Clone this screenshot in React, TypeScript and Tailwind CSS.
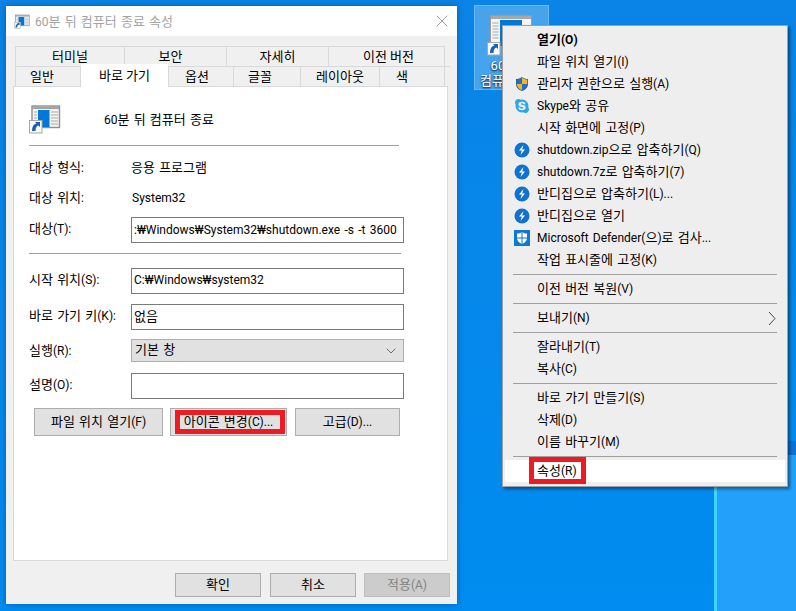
import { ChevronDown, X } from 'lucide-react';
import { FaSkype } from 'react-icons/fa';

// hangul runs sit a size above latin ones, the way Malgun Gothic pairs with Segoe UI
function T({ children }: { children: string }) {
  return (
    <>
      {children.split(/([\uAC00-\uD7A3 ]+)/).map((part, i) =>
        i % 2 === 1 ? (
          <span key={i} className="text-[13px] whitespace-pre [word-spacing:1px]">
            {part}
          </span>
        ) : (
          part
        ),
      )}
    </>
  );
}

function ShortcutIcon({ size }: { size: number }) {
  return (
    <svg width={size} height={size} viewBox="0 0 32 32">
      <rect x="3" y="2" width="27.500" height="21.500" fill="#f4f4f4" stroke="#8f8f8f" strokeWidth="1.400" />
      <rect x="3.500" y="2.500" width="26.500" height="2.500" fill="#a3a3a3" />
      <rect x="9" y="6" width="11.500" height="17" fill="#0078d7" />
      <path d="M22 8h7M22 11h7M22 14h7M22 17h7M22 20h7M5 8h3M5 11h3M5 14h3" stroke="#a8a8a8" strokeWidth="1" />
      <rect x="0.500" y="16.500" width="12.500" height="12.500" fill="#f8f8f8" stroke="#a8a8a8" />
      <path d="M3 27c0-4.500 1.500-7 4.500-7.500L6 18h5v5l-1.500-1.500c-2 .5-3 2-3 5.500z" fill="#1c5fae" />
    </svg>
  );
}

function DesktopShortcut() {
  return (
    <svg width="46" height="41" viewBox="0 0 46 41">
      <rect x="3.500" y="0.500" width="41" height="31" fill="#f4f4f4" stroke="#9a9a9a" />
      <rect x="4" y="1" width="40" height="3" fill="#a8a8a8" />
      <rect x="13" y="5" width="22" height="26" fill="#0078d7" />
      <path d="M5.500 8h6M5.500 11h6M5.500 14h6M5.500 17h6M5.500 20h6M5.500 23h6" stroke="#a8a8a8" strokeWidth="1" />
      <rect x="0.500" y="27.500" width="12.500" height="12.500" fill="#f8f8f8" stroke="#a8a8a8" />
      <path d="M3 38c0-4.500 1.500-7 4.500-7.500L6 29h5v5l-1.500-1.500c-2 .5-3 2-3 5.500z" fill="#1c5fae" />
    </svg>
  );
}

function UacShield() {
  return (
    <svg width="16" height="16" viewBox="0 0 16 16">
      <path d="M8 1c2 1.400 4 2 6 2v5c0 3.500-2.500 5.800-6 7-3.500-1.200-6-3.500-6-7V3c2 0 4-.6 6-2z" fill="#2f5fa8" />
      <path d="M8 1.800V8H2.800V3.700C4.600 3.500 6.400 3 8 1.800z" fill="#1f6fd0" />
      <path d="M8 1.800c1.600 1.200 3.400 1.700 5.200 1.900V8H8z" fill="#f7b61b" />
      <path d="M2.800 8H8v6.200C5 13 2.900 11 2.800 8z" fill="#f7b61b" />
      <path d="M8 8h5.200c-.1 3-2.200 5-5.200 6.200z" fill="#1f6fd0" />
    </svg>
  );
}

function SkypeIcon() {
  return <FaSkype className="text-[16px] text-[#2ba7e8]" />;
}

function BandizipIcon() {
  return (
    <svg width="16" height="16" viewBox="0 0 16 16">
      <circle cx="8" cy="8" r="7.500" fill="#0f72cf" />
      <path d="M9.500 3 5 8.500h2.800L6.500 13 11 7.500H8.200z" fill="#ffffff" />
    </svg>
  );
}

function DefenderIcon() {
  return (
    <svg width="16" height="16" viewBox="0 0 16 16">
      <rect width="16" height="16" fill="#0f78d4" />
      <path d="M8 2c1.600 1 3.400 1.500 5 1.500V8c0 2.800-2 4.800-5 6-3-1.200-5-3.200-5-6V3.500C4.600 3.500 6.400 3 8 2z" fill="#ffffff" />
      <path d="M7.500 2v12.500h1V2zM2.500 7.500v1h11v-1z" fill="#0f78d4" />
    </svg>
  );
}

const topTabs = [
  { label: '터미널', w: 'w-[110px]' },
  { label: '보안', w: 'w-[102px] pr-[10px]' },
  { label: '자세히', w: 'w-[102px]' },
  { label: '이전 버전', w: 'w-[116px] pl-[4px]' },
];

function Field({ label, value, className }: { label: string; value: string; className: string }) {
  return (
    <div className={`flex items-center ${className}`}>
      <span className="w-[102px] pb-0.5">
        <T>{label}</T>
      </span>
      <div className="h-[26px] w-[273px] overflow-hidden border border-[#7a7a7a] bg-white pt-[2px] pl-[2px] whitespace-nowrap">
        <T>{value}</T>
      </div>
    </div>
  );
}

function PushButton({ className, label, children }: { className: string; label: string; children?: React.ReactNode }) {
  return (
    <button className={`flex items-center justify-center border border-[#adadad] bg-[#e1e1e1] ${className}`}>
      <T>{label}</T>
      {children}
    </button>
  );
}

function Dialog() {
  return (
    <div className="absolute top-[6px] left-[6px] flex h-[598px] w-[451px] flex-col bg-[#f0f0f0] text-[12px] text-black shadow-[0_0_6px_rgba(0,40,90,0.45)]">
      <div className="flex h-[30px] shrink-0 items-center justify-between bg-white pr-[5px] pl-[8px] text-[#a3a3a3]">
        <div className="flex items-center gap-[5px] pt-[2px]">
          <ShortcutIcon size={16} />
          <span>
            <T>60분 뒤 컴퓨터 종료 속성</T>
          </span>
        </div>
        <X size={20} strokeWidth={0.8} className="-mt-[1px] text-[#777]" />
      </div>

      <div className="mt-[10px] flex flex-1 flex-col px-[7px] text-[13px]">
        <div className="ml-[2px] flex h-[20px]">
          {topTabs.map((t) => (
            <div
              key={t.label}
              className={`flex items-center justify-center border-t border-r border-[#d9d9d9] first:border-l ${t.w}`}
            >
              {t.label}
            </div>
          ))}
        </div>
        <div className="relative z-10 ml-[2px] flex h-[20px] border-t border-[#d9d9d9]">
          <div className="flex w-[66px] items-center justify-center border-r border-l border-[#d9d9d9] pr-[12px]">일반</div>
          <div className="-mt-[3px] flex h-[24px] w-[87px] items-center justify-center bg-white">바로 가기</div>
          <div className="flex w-[66px] items-center justify-center border-r border-l border-[#d9d9d9] pr-[8px]">옵션</div>
          <div className="flex w-[67px] items-center justify-center border-r border-[#d9d9d9] pr-[14px]">글꼴</div>
          <div className="flex w-[79px] items-center justify-center border-r border-[#d9d9d9]">레이아웃</div>
          <div className="flex w-[65px] items-center justify-center border-r border-[#d9d9d9] pr-[20px]">색</div>
        </div>

        <div className="h-[475px] w-[435px] border border-[#d9d9d9] bg-white pl-[15px] text-[12px]">
          <div className="mt-[17px] flex items-center">
            <ShortcutIcon size={32} />
            <span className="ml-[43px]">
              <T>60분 뒤 컴퓨터 종료</T>
            </span>
          </div>
          <div className="mt-[9px] h-px w-[370px] bg-[#a0a0a0]" />

          <div className="mt-[14px] flex h-[16px] items-center">
            <span className="w-[102px]">
              <T>대상 형식:</T>
            </span>
            <span>
              <T>응용 프로그램</T>
            </span>
          </div>
          <div className="mt-[14px] flex h-[16px] items-center">
            <span className="w-[102px]">
              <T>대상 위치:</T>
            </span>
            <span className="pl-px">System32</span>
          </div>
          <Field label="대상(T):" value=":₩Windows₩System32₩shutdown.exe -s -t 3600" className="mt-[11px]" />
          <div className="mt-[10px] h-px w-[372px] bg-[#a0a0a0]" />
          <Field label="시작 위치(S):" value="C:₩Windows₩system32" className="mt-[14px]" />
          <Field label="바로 가기 키(K):" value="없음" className="mt-[10px]" />
          <div className="mt-[9px] flex items-center">
            <span className="w-[102px]">
              <T>실행(R):</T>
            </span>
            <div className="flex h-[23px] w-[273px] items-center justify-between border border-[#adadad] bg-[#e1e1e1] pr-[4px] pl-[3px]">
              <span className="pb-0.5">
                <T>기본 창</T>
              </span>
              <ChevronDown size={16} strokeWidth={1} className="text-[#333]" />
            </div>
          </div>
          <div className="mt-[11px] flex items-center">
            <span className="w-[102px] pb-0.5">
              <T>설명(O):</T>
            </span>
            <div className="h-[26px] w-[273px] border border-[#7a7a7a] bg-white" />
          </div>
          <div className="mt-[9px] ml-[5px] flex h-[28px]">
            <PushButton className="w-[129px]" label="파일 위치 열기(F)" />
            <PushButton className="relative ml-[7px] w-[117px]" label="아이콘 변경(C)...">
              <span className="absolute top-[1px] right-[1px] bottom-[1px] left-[4px] border-[5px] border-[#ed1c24]" />
            </PushButton>
            <PushButton className="ml-[8px] w-[105px]" label="고급(D)..." />
          </div>
        </div>

        <div className="mt-[12px] ml-[162px] flex h-[24px] text-[12px]">
          <PushButton className="w-[86px]" label="확인" />
          <PushButton className="ml-[9px] w-[86px]" label="취소" />
          <button className="ml-[8px] flex w-[86px] items-center justify-center border border-[#bfbfbf] bg-[#cccccc] text-[#838383]">
            <T>적용(A)</T>
          </button>
        </div>
      </div>
    </div>
  );
}

function MenuItem({
  label,
  icon,
  bold,
  arrow,
}: {
  label: string;
  icon?: React.ReactNode;
  bold?: boolean;
  arrow?: boolean;
}) {
  return (
    <div className={`flex h-[22px] items-center ${bold ? 'font-bold' : ''}`}>
      <div className="flex w-[34px] justify-center pl-[3px]">{icon}</div>
      <span className="flex-1">
        <T>{label}</T>
      </span>
      {arrow && (
        <svg width="8" height="15" viewBox="0 0 8 15" className="mr-[11px]">
          <path d="M1 1l6 6.500-6 6.500" fill="none" stroke="#444" strokeWidth="1" />
        </svg>
      )}
    </div>
  );
}

function Separator() {
  return <div className="my-[3px] ml-[10px] h-px w-[264px] bg-[#a0a0a0]" />;
}

function ContextMenu() {
  return (
    <div className="absolute top-[25px] left-[502px] h-[462px] w-[286px] border border-[#a0a0a0] bg-[#eeeeee] pt-[3px] text-[12px] text-black shadow-[2px_2px_3px_rgba(0,0,0,0.45)]">
      <MenuItem label="열기(O)" bold />
      <MenuItem label="파일 위치 열기(I)" />
      <MenuItem label="관리자 권한으로 실행(A)" icon={<UacShield />} />
      <MenuItem label="Skype와 공유" icon={<SkypeIcon />} />
      <MenuItem label="시작 화면에 고정(P)" />
      <MenuItem label="shutdown.zip으로 압축하기(Q)" icon={<BandizipIcon />} />
      <MenuItem label="shutdown.7z로 압축하기(7)" icon={<BandizipIcon />} />
      <MenuItem label="반디집으로 압축하기(L)..." icon={<BandizipIcon />} />
      <MenuItem label="반디집으로 열기" icon={<BandizipIcon />} />
      <MenuItem label="Microsoft Defender(으)로 검사..." icon={<DefenderIcon />} />
      <MenuItem label="작업 표시줄에 고정(K)" />
      <Separator />
      <MenuItem label="이전 버전 복원(V)" />
      <Separator />
      <MenuItem label="보내기(N)" arrow />
      <Separator />
      <MenuItem label="잘라내기(T)" />
      <MenuItem label="복사(C)" />
      <Separator />
      <MenuItem label="바로 가기 만들기(S)" />
      <MenuItem label="삭제(D)" />
      <MenuItem label="이름 바꾸기(M)" />
      <Separator />
      <div className="relative mx-[2px] flex h-[22px] items-center bg-white pl-[32px]">
        <span>
          <T>속성(R)</T>
        </span>
        <span className="absolute -top-[3px] left-[24px] h-[27px] w-[57px] border-[5px] border-[#ed1c24]" />
      </div>
    </div>
  );
}

function DesktopIcon() {
  return (
    <div className="absolute top-[5px] left-[474px] flex h-[85px] w-[75px] flex-col items-center border border-[#66b9f2] bg-[#ffffff40] pt-[9px] text-[13px] leading-[15px] text-white [text-shadow:0_1px_2px_#000]">
      <div className="ml-[12px] self-start">
        <DesktopShortcut />
      </div>
      <span className="mt-[2px] whitespace-nowrap">60분 뒤</span>
      <span className="whitespace-nowrap">컴퓨터 종료</span>
    </div>
  );
}

export default function App() {
  return (
    <div className="relative h-[611px] w-[796px] overflow-hidden bg-[linear-gradient(180deg,#0a84e6_0%,#008cf0_100%)] font-['Roboto','Noto_Sans_CJK_KR',sans-serif]">
      <div className="absolute top-[441px] right-0 left-[714px] h-[14px] bg-[#0a72d6]" />
      <div className="absolute top-[455px] right-0 bottom-0 left-[714px] border-l-[3px] border-[#3fd4ff] bg-[#22a0fa]" />
      <DesktopIcon />
      <Dialog />
      <ContextMenu />
    </div>
  );
}
